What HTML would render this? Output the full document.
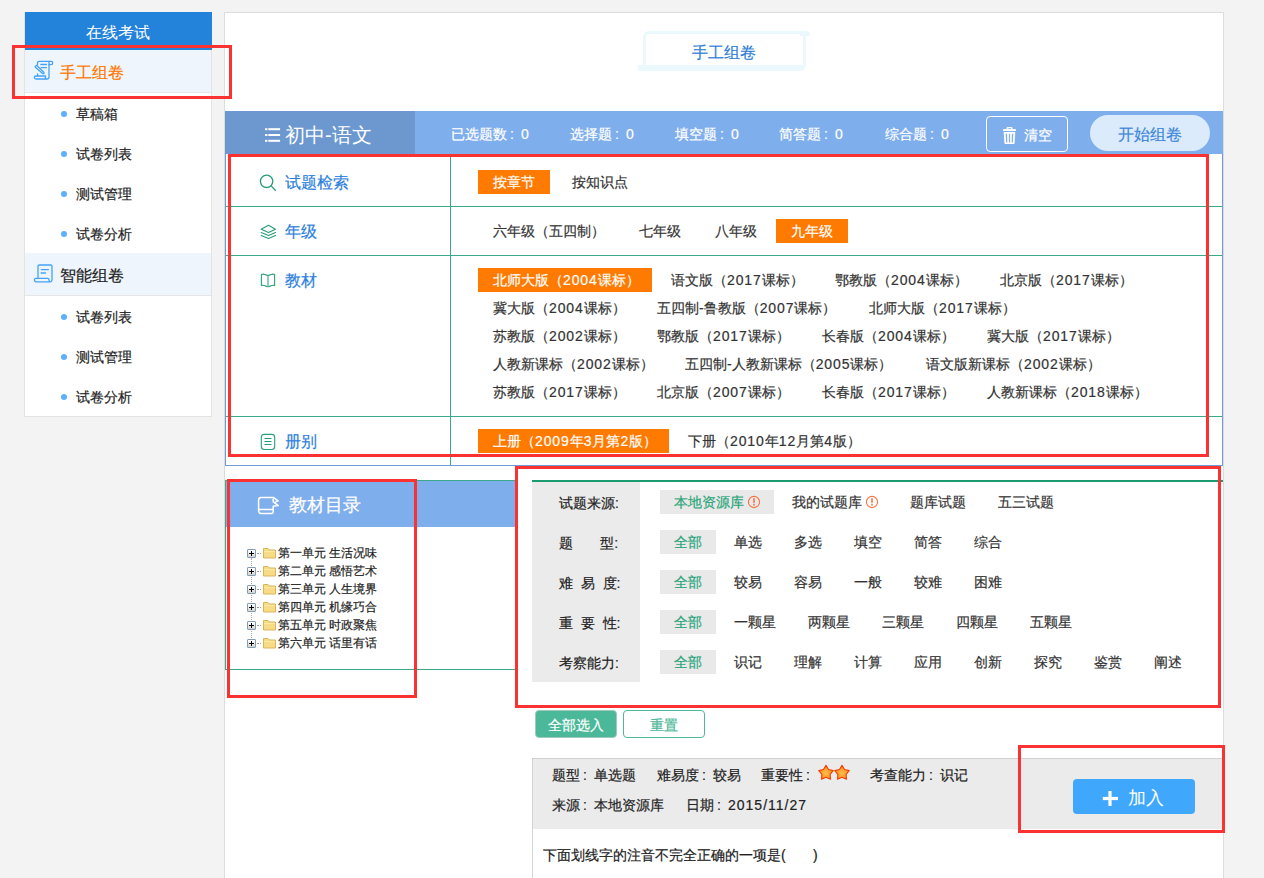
<!DOCTYPE html>
<html><head><meta charset="utf-8">
<style>
*{margin:0;padding:0;box-sizing:border-box}
html,body{width:1264px;height:878px;overflow:hidden;background:#f3f3f3;font-family:"Liberation Sans",sans-serif;color:#222;-webkit-text-stroke-width:0.2px}
.a{position:absolute}
.t{position:absolute;white-space:nowrap;line-height:1}
/* sidebar */
#side{position:absolute;left:24px;top:12px;width:188px;height:405px;background:#fff;border:1px solid #e3e3e3}
#sidehd{position:absolute;left:25px;top:12px;width:187px;height:38px;background:#2382d9;color:#fff;font-size:16px;text-align:center;line-height:42px;padding-right:2px;-webkit-text-stroke-width:0}
.sact{position:absolute;left:25px;width:186px;height:43px;background:#eff5fc;border-bottom:1px solid #e6e6e6}
.dot{position:absolute;width:6px;height:6px;border-radius:50%;background:#5cb0ff}
.sub{position:absolute;font-size:14px;line-height:1;color:#222;white-space:nowrap}
/* main */
#main{position:absolute;left:224px;top:12px;width:1000px;height:880px;background:#fff;border:1px solid #dcdcdc}
.red{position:absolute;border:3px solid #fb3232}
.g{position:absolute;background:#3aa98a;height:1px}
.opt{position:absolute;height:24px;line-height:24px;font-size:14px;padding:0 15px;white-space:nowrap;color:#333}
.opt.on{background:#ff7a00;color:#fff}
.lab{position:absolute;font-size:16px;color:#2c7fdd;white-space:nowrap;line-height:1}
.fl{position:absolute;font-size:14px;color:#222;white-space:nowrap;line-height:1}
.fo{position:absolute;height:24px;line-height:24px;font-size:14px;padding:0 14px;white-space:nowrap;color:#333}
.fo.on{background:#e9e9e9;color:#2aa57a}
.c{display:inline-block;width:14px;padding-left:3px;font-size:14px}
.d{letter-spacing:0.9px}
.tree{position:absolute;left:247px;font-size:12px;line-height:1;color:#222;white-space:nowrap}
</style></head><body>

<!-- SIDEBAR -->
<div id="side"></div>
<div id="sidehd">在线考试</div>
<div class="sact" style="top:50px"></div>
<div class="sact" style="top:253px"></div>


<!-- sidebar items -->
<svg class="a" style="left:28px;top:55px" width="30" height="30" viewBox="0 0 30 30" fill="none" stroke="#44a3f7" stroke-width="1.3" stroke-linecap="round" stroke-linejoin="round">
<path d="M9.5 9.6V8.2Q9.5 6.3 11.4 6.3H23.2Q24.7 6.3 24.7 8Q24.7 9.7 23 9.7H21"/>
<path d="M21 6.5V22Q21 24 19 24H8.3Q6.3 24 6.3 22.5Q6.3 21 8 21H17.5V23.5"/>
<path d="M12.8 9.5H18.4M13.2 12.7H18.4"/>
<path d="M7.2 11.2L8.6 10.3L15.8 17.2L16 18.6L14.6 18.5L7.4 12.3Z"/>
<path d="M9.6 18.8V21"/>
</svg>
<div class="t" style="left:60px;top:65px;font-size:16px;color:#ff7800">手工组卷</div>
<div class="dot" style="left:61px;top:111px"></div><div class="sub" style="left:76px;top:107px">草稿箱</div>
<div class="dot" style="left:61px;top:151px"></div><div class="sub" style="left:76px;top:147px">试卷列表</div>
<div class="dot" style="left:61px;top:191px"></div><div class="sub" style="left:76px;top:187px">测试管理</div>
<div class="dot" style="left:61px;top:231px"></div><div class="sub" style="left:76px;top:227px">试卷分析</div>
<svg class="a" style="left:28px;top:260px" width="30" height="30" viewBox="0 0 30 30" fill="none" stroke="#44a3f7" stroke-width="1.3" stroke-linecap="round" stroke-linejoin="round">
<path d="M10 18.5V6.3Q10 5 11.3 5H22.8Q24 5 24 6.3V20Q24 21.8 22.3 21.8H8.2Q6.5 21.8 6.5 20V19.6Q6.5 18.3 7.8 18.3H19.7Q20.8 18.3 21 19.6L21.4 21.5"/>
<path d="M13.3 9.6H20.4M13.1 13H17.5"/>
</svg>
<div class="t" style="left:60px;top:268px;font-size:16px;color:#222">智能组卷</div>
<div class="dot" style="left:61px;top:314px"></div><div class="sub" style="left:76px;top:310px">试卷列表</div>
<div class="dot" style="left:61px;top:354px"></div><div class="sub" style="left:76px;top:350px">测试管理</div>
<div class="dot" style="left:61px;top:394px"></div><div class="sub" style="left:76px;top:390px">试卷分析</div>

<!-- MAIN -->
<div id="main"></div>
<div class="a" style="left:643px;top:31px;width:164px;height:38px;border-left:3.5px solid #ebf9fd;border-top:3.5px solid #ebf9fd;border-top-left-radius:6px"></div>
<div class="a" style="left:800px;top:31px;width:10px;height:4.5px;background:#ebf9fd;border-top-right-radius:4px"></div>
<div class="a" style="left:638px;top:34px;width:168px;height:37px;border-right:3.2px solid #ebf9fd;border-bottom:6px solid #ebf9fd;border-bottom-right-radius:6px;border-bottom-left-radius:3px"></div>
<div class="t" style="left:692px;top:45px;font-size:16px;color:#2f80d6">手工组卷</div>

<!-- header bar -->
<div class="a" style="left:225px;top:111px;width:190px;height:43px;background:#6c98cf"></div>
<div class="a" style="left:415px;top:111px;width:808px;height:43px;background:#7faeed"></div>
<svg class="a" style="left:264px;top:127px" width="18" height="17" viewBox="0 0 18 17" fill="#fff">
<rect x="1" y="1.2" width="2.4" height="2"/><rect x="4.3" y="1.2" width="11.8" height="2"/>
<rect x="1" y="7" width="2.4" height="2"/><rect x="4.3" y="7" width="11.8" height="2"/>
<rect x="1" y="12.8" width="2.4" height="2"/><rect x="4.3" y="12.8" width="11.8" height="2"/>
</svg>
<div class="t" style="left:285px;top:125px;font-size:20px;color:#fff;-webkit-text-stroke-width:0">初中-语文</div>
<div class="t" style="left:451px;top:127px;font-size:14px;color:#fff">已选题数<span class="c">:</span>0</div>
<div class="t" style="left:570px;top:127px;font-size:14px;color:#fff">选择题<span class="c">:</span>0</div>
<div class="t" style="left:675px;top:127px;font-size:14px;color:#fff">填空题<span class="c">:</span>0</div>
<div class="t" style="left:779px;top:127px;font-size:14px;color:#fff">简答题<span class="c">:</span>0</div>
<div class="t" style="left:885px;top:127px;font-size:14px;color:#fff">综合题<span class="c">:</span>0</div>
<div class="a" style="left:986px;top:116px;width:82px;height:36px;border:1px solid #fff;border-radius:4px"></div>
<svg class="a" style="left:995px;top:118px" width="30" height="30" viewBox="0 0 30 30" fill="#fff">
<path d="M11.6 11V10.2Q11.6 9 12.8 9H16.4Q17.6 9 17.6 10.2V11H20Q21 11 21 12V13.1H8V12Q8 11 9 11Z M13.2 10.2V11H16V10.2Z" fill-rule="evenodd"/>
<path d="M8.7 14H20.3L19.6 25Q19.5 26 18.5 26H10.5Q9.5 26 9.4 25Z M10.7 15.8L11.1 24.4H12.3L12.1 15.8Z M13.9 15.8V24.4H15.1V15.8Z M16.9 15.8L16.7 24.4H17.9L18.3 15.8Z" fill-rule="evenodd"/>
</svg>
<div class="t" style="left:1024px;top:128px;font-size:14px;color:#fff">清空</div>
<div class="a" style="left:1090px;top:115px;width:120px;height:36px;border-radius:18px;background:#dcebfb"></div>
<div class="t" style="left:1118px;top:127px;font-size:16px;color:#3f88d9">开始组卷</div>

<!-- filter table -->
<div class="a" style="left:225px;top:154px;width:998px;height:312px;border:1px solid #6f9ad4;border-top:none"></div>
<div class="a" style="left:450px;top:154px;width:1px;height:311px;background:#3aa98a"></div>
<div class="g" style="left:226px;top:206px;width:996px"></div>
<div class="g" style="left:226px;top:255px;width:996px"></div>
<div class="g" style="left:226px;top:416px;width:996px"></div>


<!-- table labels -->
<svg class="a" style="left:254px;top:170px" width="30" height="30" viewBox="0 0 30 30" fill="none" stroke="#2a9f76" stroke-width="1.3" stroke-linecap="round">
<circle cx="12.6" cy="11.3" r="6.2"/><path d="M17.2 15.9L21.3 20.2"/>
</svg>
<div class="lab" style="left:285px;top:175px">试题检索</div>
<svg class="a" style="left:254px;top:216px" width="30" height="30" viewBox="0 0 30 30" fill="none" stroke="#2a9f76" stroke-width="1.1" stroke-linejoin="round" stroke-linecap="round">
<path d="M14.5 9.3L21.5 13.3L14.5 16.6L7.2 13.3Z"/><path d="M7.2 16.5L14.5 19.6L21.5 16.5"/><path d="M7.2 19.5L14.5 22.6L21.5 19.5"/>
</svg>
<div class="lab" style="left:285px;top:224px">年级</div>
<svg class="a" style="left:254px;top:266px" width="30" height="30" viewBox="0 0 30 30" fill="none" stroke="#2a9f76" stroke-width="1.1" stroke-linejoin="round">
<path d="M7.4 8.6Q9.5 7.6 11 8.6Q14 10.2 17 8.6Q18.7 7.6 20.6 8.6V19.6Q18.8 18.9 17 19.8Q14 21.6 11 19.8Q9.2 18.9 7.4 19.6Z"/><path d="M14 9.6V21" stroke-width="1.4" stroke="#5cb99a"/>
</svg>
<div class="lab" style="left:285px;top:273px">教材</div>
<svg class="a" style="left:254px;top:426px" width="30" height="30" viewBox="0 0 30 30" fill="none" stroke="#2a9f76" stroke-width="1.1" stroke-linecap="round">
<rect x="7.3" y="8.4" width="13.4" height="15.1" rx="3"/><path d="M10.8 12.5H17.1M10.8 15.5H17.1M10.8 18.5H17.1"/>
</svg>
<div class="lab" style="left:285px;top:434px">册别</div>

<!-- options -->
<div class="opt on" style="left:478px;top:170px;width:72px">按章节</div>
<div class="opt" style="left:557px;top:170px">按知识点</div>

<div class="opt" style="left:478px;top:219px">六年级（五四制）</div>
<div class="opt" style="left:624px;top:219px">七年级</div>
<div class="opt" style="left:700px;top:219px">八年级</div>
<div class="opt on" style="left:776px;top:219px;width:72px">九年级</div>

<div class="opt on" style="left:478px;top:268px;width:174px">北师大版（<span class="d">2004</span>课标）</div>
<div class="opt" style="left:656px;top:268px">语文版（<span class="d">2017</span>课标）</div>
<div class="opt" style="left:820px;top:268px">鄂教版（<span class="d">2004</span>课标）</div>
<div class="opt" style="left:985px;top:268px">北京版（<span class="d">2017</span>课标）</div>

<div class="opt" style="left:478px;top:296px">冀大版（<span class="d">2004</span>课标）</div>
<div class="opt" style="left:642px;top:296px">五四制-鲁教版（<span class="d">2007</span>课标）</div>
<div class="opt" style="left:854px;top:296px">北师大版（<span class="d">2017</span>课标）</div>

<div class="opt" style="left:478px;top:324px">苏教版（<span class="d">2002</span>课标）</div>
<div class="opt" style="left:642px;top:324px">鄂教版（<span class="d">2017</span>课标）</div>
<div class="opt" style="left:807px;top:324px">长春版（<span class="d">2004</span>课标）</div>
<div class="opt" style="left:972px;top:324px">冀大版（<span class="d">2017</span>课标）</div>

<div class="opt" style="left:478px;top:352px">人教新课标（<span class="d">2002</span>课标）</div>
<div class="opt" style="left:670px;top:352px">五四制-人教新课标（<span class="d">2005</span>课标）</div>
<div class="opt" style="left:911px;top:352px">语文版新课标（<span class="d">2002</span>课标）</div>

<div class="opt" style="left:478px;top:380px">苏教版（<span class="d">2017</span>课标）</div>
<div class="opt" style="left:642px;top:380px">北京版（<span class="d">2007</span>课标）</div>
<div class="opt" style="left:807px;top:380px">长春版（<span class="d">2017</span>课标）</div>
<div class="opt" style="left:972px;top:380px">人教新课标（<span class="d">2018</span>课标）</div>

<div class="opt on" style="left:478px;top:429px;width:191px">上册（<span class="d">2009</span>年<span class="d">3</span>月第<span class="d">2</span>版）</div>
<div class="opt" style="left:673px;top:429px">下册（<span class="d">2010</span>年<span class="d">12</span>月第<span class="d">4</span>版）</div>

<!-- red box 1 -->
<div class="red" style="left:228px;top:154px;width:981px;height:303px"></div>
<div class="red" style="left:12px;top:45px;width:220px;height:54px"></div>


<!-- 教材目录 panel -->
<div class="a" style="left:225px;top:480px;width:291px;height:190px;border:1px solid #3aa98a;border-right:none"></div>
<div class="a" style="left:226px;top:481px;width:290px;height:46px;background:#7faeed"></div>
<svg class="a" style="left:255px;top:490px" width="30" height="30" viewBox="0 0 30 30" fill="none" stroke="#fff" stroke-width="1.5" stroke-linejoin="round" stroke-linecap="round">
<path d="M18.2 16.3V21.6Q18.2 23.4 16.4 23.4H6.2Q3.6 23.4 3.6 20.8V10Q3.6 7.4 6.2 7.4H18.4L23.1 10.8L19.3 12.6L23.3 15.6L18.2 16.3"/>
<path d="M3.8 19.6H18.2"/><path d="M18.2 9V12"/>
</svg>
<div class="t" style="left:289px;top:496px;font-size:18px;color:#fff">教材目录</div>

<div class="a" style="left:251px;top:558px;width:1px;height:86px;border-left:1px dotted #aaa"></div>
<div class="a" style="left:247px;top:549px;width:9px;height:9px;border:1px solid #7f9db9;border-radius:1px;background:linear-gradient(#fff,#d8d4cc)"></div>
<div class="a" style="left:249px;top:553px;width:5px;height:1px;background:#000"></div><div class="a" style="left:251px;top:551px;width:1px;height:5px;background:#000"></div>
<div class="a" style="left:257px;top:553px;width:4px;height:1px;border-top:1px dotted #999"></div>
<svg class="a" style="left:262px;top:547px" width="15" height="12" viewBox="0 0 15 12"><path d="M1.5 1.5H6L7.5 3H13.5V11H1.5Z" fill="#f7dc85" stroke="#d9b45c" stroke-width="1"/><path d="M2 4.5H13" stroke="#fbe9a8" stroke-width="1"/></svg>
<div class="t" style="left:278px;top:547px;font-size:12px;color:#222">第一单元 生活况味</div>
<div class="a" style="left:247px;top:567px;width:9px;height:9px;border:1px solid #7f9db9;border-radius:1px;background:linear-gradient(#fff,#d8d4cc)"></div>
<div class="a" style="left:249px;top:571px;width:5px;height:1px;background:#000"></div><div class="a" style="left:251px;top:569px;width:1px;height:5px;background:#000"></div>
<div class="a" style="left:257px;top:571px;width:4px;height:1px;border-top:1px dotted #999"></div>
<svg class="a" style="left:262px;top:565px" width="15" height="12" viewBox="0 0 15 12"><path d="M1.5 1.5H6L7.5 3H13.5V11H1.5Z" fill="#f7dc85" stroke="#d9b45c" stroke-width="1"/><path d="M2 4.5H13" stroke="#fbe9a8" stroke-width="1"/></svg>
<div class="t" style="left:278px;top:565px;font-size:12px;color:#222">第二单元 感悟艺术</div>
<div class="a" style="left:247px;top:585px;width:9px;height:9px;border:1px solid #7f9db9;border-radius:1px;background:linear-gradient(#fff,#d8d4cc)"></div>
<div class="a" style="left:249px;top:589px;width:5px;height:1px;background:#000"></div><div class="a" style="left:251px;top:587px;width:1px;height:5px;background:#000"></div>
<div class="a" style="left:257px;top:589px;width:4px;height:1px;border-top:1px dotted #999"></div>
<svg class="a" style="left:262px;top:583px" width="15" height="12" viewBox="0 0 15 12"><path d="M1.5 1.5H6L7.5 3H13.5V11H1.5Z" fill="#f7dc85" stroke="#d9b45c" stroke-width="1"/><path d="M2 4.5H13" stroke="#fbe9a8" stroke-width="1"/></svg>
<div class="t" style="left:278px;top:583px;font-size:12px;color:#222">第三单元 人生境界</div>
<div class="a" style="left:247px;top:603px;width:9px;height:9px;border:1px solid #7f9db9;border-radius:1px;background:linear-gradient(#fff,#d8d4cc)"></div>
<div class="a" style="left:249px;top:607px;width:5px;height:1px;background:#000"></div><div class="a" style="left:251px;top:605px;width:1px;height:5px;background:#000"></div>
<div class="a" style="left:257px;top:607px;width:4px;height:1px;border-top:1px dotted #999"></div>
<svg class="a" style="left:262px;top:601px" width="15" height="12" viewBox="0 0 15 12"><path d="M1.5 1.5H6L7.5 3H13.5V11H1.5Z" fill="#f7dc85" stroke="#d9b45c" stroke-width="1"/><path d="M2 4.5H13" stroke="#fbe9a8" stroke-width="1"/></svg>
<div class="t" style="left:278px;top:601px;font-size:12px;color:#222">第四单元 机缘巧合</div>
<div class="a" style="left:247px;top:621px;width:9px;height:9px;border:1px solid #7f9db9;border-radius:1px;background:linear-gradient(#fff,#d8d4cc)"></div>
<div class="a" style="left:249px;top:625px;width:5px;height:1px;background:#000"></div><div class="a" style="left:251px;top:623px;width:1px;height:5px;background:#000"></div>
<div class="a" style="left:257px;top:625px;width:4px;height:1px;border-top:1px dotted #999"></div>
<svg class="a" style="left:262px;top:619px" width="15" height="12" viewBox="0 0 15 12"><path d="M1.5 1.5H6L7.5 3H13.5V11H1.5Z" fill="#f7dc85" stroke="#d9b45c" stroke-width="1"/><path d="M2 4.5H13" stroke="#fbe9a8" stroke-width="1"/></svg>
<div class="t" style="left:278px;top:619px;font-size:12px;color:#222">第五单元 时政聚焦</div>
<div class="a" style="left:247px;top:639px;width:9px;height:9px;border:1px solid #7f9db9;border-radius:1px;background:linear-gradient(#fff,#d8d4cc)"></div>
<div class="a" style="left:249px;top:643px;width:5px;height:1px;background:#000"></div><div class="a" style="left:251px;top:641px;width:1px;height:5px;background:#000"></div>
<div class="a" style="left:257px;top:643px;width:4px;height:1px;border-top:1px dotted #999"></div>
<svg class="a" style="left:262px;top:637px" width="15" height="12" viewBox="0 0 15 12"><path d="M1.5 1.5H6L7.5 3H13.5V11H1.5Z" fill="#f7dc85" stroke="#d9b45c" stroke-width="1"/><path d="M2 4.5H13" stroke="#fbe9a8" stroke-width="1"/></svg>
<div class="t" style="left:278px;top:637px;font-size:12px;color:#222">第六单元 话里有话</div>

<!-- filter panel -->
<div class="a" style="left:532px;top:480px;width:691px;height:2px;background:#1b9b70"></div>
<div class="a" style="left:532px;top:482px;width:108px;height:200px;background:#ebebeb"></div>
<div class="fl" style="left:559px;top:496px">试题来源:</div>
<div class="fl" style="left:559px;top:536px">题&nbsp;&nbsp;&nbsp;&nbsp;&nbsp;&nbsp;&nbsp;型:</div>
<div class="fl" style="left:559px;top:576px">难&nbsp;&nbsp;易&nbsp;&nbsp;度:</div>
<div class="fl" style="left:559px;top:616px">重&nbsp;&nbsp;要&nbsp;&nbsp;性:</div>
<div class="fl" style="left:559px;top:656px">考察能力:</div>
<div class="fo on" style="left:660px;top:490px;width:114px">本地资源库</div>
<svg class="a" style="left:747px;top:495px" width="14" height="14" viewBox="0 0 14 14"><circle cx="7" cy="7" r="5.6" fill="none" stroke="#f4733f" stroke-width="1.1"/><rect x="6.3" y="3.2" width="1.4" height="4.6" fill="#f4602a"/><rect x="6.3" y="8.8" width="1.4" height="1.7" fill="#f4602a"/></svg>
<div class="fo" style="left:778px;top:490px;width:114px">我的试题库</div>
<svg class="a" style="left:865px;top:495px" width="14" height="14" viewBox="0 0 14 14"><circle cx="7" cy="7" r="5.6" fill="none" stroke="#f4733f" stroke-width="1.1"/><rect x="6.3" y="3.2" width="1.4" height="4.6" fill="#f4602a"/><rect x="6.3" y="8.8" width="1.4" height="1.7" fill="#f4602a"/></svg>
<div class="fo" style="left:896px;top:490px;width:84px">题库试题</div>
<div class="fo" style="left:984px;top:490px;width:84px">五三试题</div>
<div class="fo on" style="left:660px;top:530px;width:56px">全部</div>
<div class="fo" style="left:720px;top:530px;width:56px">单选</div>
<div class="fo" style="left:780px;top:530px;width:56px">多选</div>
<div class="fo" style="left:840px;top:530px;width:56px">填空</div>
<div class="fo" style="left:900px;top:530px;width:56px">简答</div>
<div class="fo" style="left:960px;top:530px;width:56px">综合</div>
<div class="fo on" style="left:660px;top:570px;width:56px">全部</div>
<div class="fo" style="left:720px;top:570px;width:56px">较易</div>
<div class="fo" style="left:780px;top:570px;width:56px">容易</div>
<div class="fo" style="left:840px;top:570px;width:56px">一般</div>
<div class="fo" style="left:900px;top:570px;width:56px">较难</div>
<div class="fo" style="left:960px;top:570px;width:56px">困难</div>
<div class="fo on" style="left:660px;top:610px;width:56px">全部</div>
<div class="fo" style="left:720px;top:610px;width:70px">一颗星</div>
<div class="fo" style="left:794px;top:610px;width:70px">两颗星</div>
<div class="fo" style="left:868px;top:610px;width:70px">三颗星</div>
<div class="fo" style="left:942px;top:610px;width:70px">四颗星</div>
<div class="fo" style="left:1016px;top:610px;width:70px">五颗星</div>
<div class="fo on" style="left:660px;top:650px;width:56px">全部</div>
<div class="fo" style="left:720px;top:650px;width:56px">识记</div>
<div class="fo" style="left:780px;top:650px;width:56px">理解</div>
<div class="fo" style="left:840px;top:650px;width:56px">计算</div>
<div class="fo" style="left:900px;top:650px;width:56px">应用</div>
<div class="fo" style="left:960px;top:650px;width:56px">创新</div>
<div class="fo" style="left:1020px;top:650px;width:56px">探究</div>
<div class="fo" style="left:1080px;top:650px;width:56px">鉴赏</div>
<div class="fo" style="left:1140px;top:650px;width:56px">阐述</div>

<div class="red" style="left:515px;top:466px;width:706px;height:242px"></div>
<div class="red" style="left:227px;top:479px;width:190px;height:219px"></div>

<!-- buttons -->
<div class="a" style="left:535px;top:710px;width:82px;height:28px;background:#4cb89a;border:1px solid #9fc9bb;border-radius:4px;color:#fff;font-size:14px;line-height:28px;text-align:center">全部选入</div>
<div class="a" style="left:623px;top:710px;width:82px;height:28px;background:#fff;border:1px solid #4cb89a;border-radius:4px;color:#4cb89a;font-size:14px;line-height:28px;text-align:center">重置</div>

<!-- question card -->
<div class="a" style="left:532px;top:758px;width:691px;height:130px;border-left:1px solid #d5d5d5;border-top:1px solid #cfcfcf"></div>
<div class="a" style="left:533px;top:759px;width:690px;height:70px;background:#ebebeb"></div>
<div class="t" style="left:552px;top:768px;font-size:14px;color:#222">题型<span class="c">:</span>单选题</div>
<div class="t" style="left:657px;top:768px;font-size:14px;color:#222">难易度<span class="c">:</span>较易</div>
<div class="t" style="left:761px;top:768px;font-size:14px;color:#222">重要性<span class="c">:</span></div>
<svg class="a" style="left:816px;top:763px" width="38" height="19" viewBox="0 0 38 19">
<defs><radialGradient id="sg" cx="0.5" cy="0.55" r="0.55"><stop offset="0" stop-color="#ffbf45"/><stop offset="0.6" stop-color="#ffa030"/><stop offset="1" stop-color="#ff6a10"/></radialGradient></defs>
<path d="M10.00 2.40L12.53 6.52L17.23 7.65L14.09 11.33L14.47 16.15L10.00 14.30L5.53 16.15L5.91 11.33L2.77 7.65L7.47 6.52Z" fill="url(#sg)" stroke="#f23c00" stroke-width="1.1" stroke-linejoin="round"/>
<path d="M26.00 2.40L28.53 6.52L33.23 7.65L30.09 11.33L30.47 16.15L26.00 14.30L21.53 16.15L21.91 11.33L18.77 7.65L23.47 6.52Z" fill="url(#sg)" stroke="#f23c00" stroke-width="1.1" stroke-linejoin="round"/>
</svg>
<div class="t" style="left:870px;top:768px;font-size:14px;color:#222">考查能力<span class="c">:</span>识记</div>
<div class="t" style="left:552px;top:798px;font-size:14px;color:#222">来源<span class="c">:</span>本地资源库</div>
<div class="t" style="left:686px;top:798px;font-size:14px;color:#222">日期<span class="c">:</span><span style="letter-spacing:1px">2015/11/27</span></div>
<div class="t" style="left:543px;top:848px;font-size:14px;color:#222">下面划线字的注音不完全正确的一项是(&nbsp;&nbsp;&nbsp;&nbsp;&nbsp;&nbsp;&nbsp;)</div>

<div class="a" style="left:1073px;top:779px;width:122px;height:35px;background:#40a8fc;border-radius:4px"></div>
<svg class="a" style="left:1102px;top:790px" width="16" height="16" viewBox="0 0 16 16" fill="#fff"><rect x="6.4" y="1" width="3.2" height="15"/><rect x="0.8" y="6.9" width="15.2" height="3.2"/></svg>
<div class="t" style="left:1128px;top:789px;font-size:18px;color:#fff;-webkit-text-stroke-width:0">加入</div>
<div class="red" style="left:1018px;top:745px;width:207px;height:88px"></div>

</body></html>
